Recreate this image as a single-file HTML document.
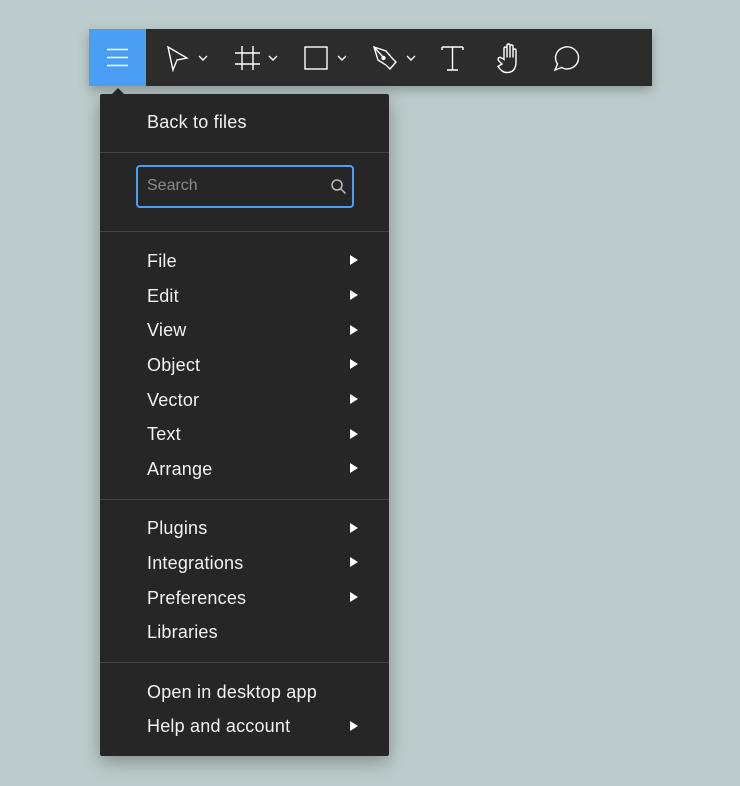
<!DOCTYPE html>
<html><head><style>
body{margin:0;width:740px;height:786px;background:#bccbcb;font-family:"Liberation Sans",sans-serif;position:relative;overflow:hidden}
.tb{position:absolute;left:89px;top:29px;width:563px;height:57px;background:#2c2c2c;box-shadow:0 4px 10px rgba(0,0,0,.25)}
.blue{position:absolute;left:0;top:0;width:57px;height:57px;background:#4a9ff5}
.tb svg{position:absolute}
.menu{position:absolute;left:100px;top:94px;width:289px;height:662px;background:#262626;border-radius:2px;box-shadow:0 6px 18px rgba(0,0,0,.3)}
.caret{position:absolute;left:112px;top:88px;width:0;height:0;border-left:6px solid transparent;border-right:6px solid transparent;border-bottom:6px solid #262626}
.it{position:absolute;left:47px;color:#f2f2f2;font-size:18px;letter-spacing:0.2px;line-height:20px}
.ar{position:absolute;left:250px;width:0;height:0;border-top:5.5px solid transparent;border-bottom:5.5px solid transparent;border-left:8px solid #fff}
.sep{position:absolute;left:0;width:289px;height:1px;background:#444}
.search{position:absolute;left:36px;top:71px;width:214px;height:39px;border:2px solid #4a9ff5;border-radius:4px;box-sizing:content-box}
</style></head><body>
<div class="tb">
<div class="blue"><svg width="57" height="57"><g stroke="#fff" stroke-width="1.6"><line x1="18" y1="20.5" x2="39" y2="20.5"/><line x1="18" y1="28.5" x2="39" y2="28.5"/><line x1="18" y1="36.5" x2="39" y2="36.5"/></g></svg></div>
<svg width="563" height="57" style="left:0;top:0" fill="none" stroke="#fff" stroke-width="1.4">
<path d="M79 18 L98 29 L88 31 L84 41 Z"/>
<path d="M110 27 l4 4 l4 -4"/>
<path d="M153 17 v24 M164 17 v24 M146 24 h25 M146 35 h25"/>
<path d="M180 27 l4 4 l4 -4"/>
<rect x="216" y="18" width="22" height="22"/>
<path d="M249 27 l4 4 l4 -4"/>
<path d="M285 18 l12 4 l6 7 l4 4 l-6 7 l-4 -4 l-8 -5 z M285 18 l9 10"/><circle cx="294.5" cy="29" r="1.5" fill="#fff"/>
<path d="M318 27 l4 4 l4 -4"/>
<path d="M353 18 h21 M363.5 18 v23 M358 41 h11 M353 18 v3 M374 18 v3"/>
<path d="M413 35 c-2-2-5-4-3.5-6 c1.5-1.5 3.5 0 5.5 1.5 v-11 c0-2 3-2 3 0 v9 v-12 c0-2 3-2 3 0 v12 v-11 c0-2 3-2 3 0 v11 v-7 c0-2 3-2 3 0 v11 c0 7-3 11-9 11 c-4 0-6-2-9-6z"/>
<path d="M466 41 l2.5 -6 a11.5 11 0 1 1 4 3.5 z"/>
</svg>
</div>
<div class="caret"></div>
<div class="menu">
<div class="it" style="top:18px">Back to files</div>
<div class="sep" style="top:58px"></div>
<div class="search"><span style="position:absolute;left:9px;top:10px;color:#8a8a8a;font-size:16px">Search</span>
<svg width="18" height="18" style="position:absolute;left:192px;top:11px" fill="none" stroke="#bbb" stroke-width="1.5"><circle cx="7" cy="7" r="5"/><path d="M11 11 l4.5 4.5"/></svg></div>
<div class="sep" style="top:137px"></div>
<div class="it" style="top:157px">File</div><div class="ar" style="top:161px"></div>
<div class="it" style="top:192px">Edit</div><div class="ar" style="top:196px"></div>
<div class="it" style="top:226px">View</div><div class="ar" style="top:231px"></div>
<div class="it" style="top:261px">Object</div><div class="ar" style="top:265px"></div>
<div class="it" style="top:296px">Vector</div><div class="ar" style="top:300px"></div>
<div class="it" style="top:330px">Text</div><div class="ar" style="top:335px"></div>
<div class="it" style="top:365px">Arrange</div><div class="ar" style="top:369px"></div>
<div class="sep" style="top:405px"></div>
<div class="it" style="top:424px">Plugins</div><div class="ar" style="top:429px"></div>
<div class="it" style="top:459px">Integrations</div><div class="ar" style="top:463px"></div>
<div class="it" style="top:494px">Preferences</div><div class="ar" style="top:498px"></div>
<div class="it" style="top:528px">Libraries</div>
<div class="sep" style="top:568px"></div>
<div class="it" style="top:588px">Open in desktop app</div>
<div class="it" style="top:622px">Help and account</div><div class="ar" style="top:627px"></div>
</div>
</body></html>
